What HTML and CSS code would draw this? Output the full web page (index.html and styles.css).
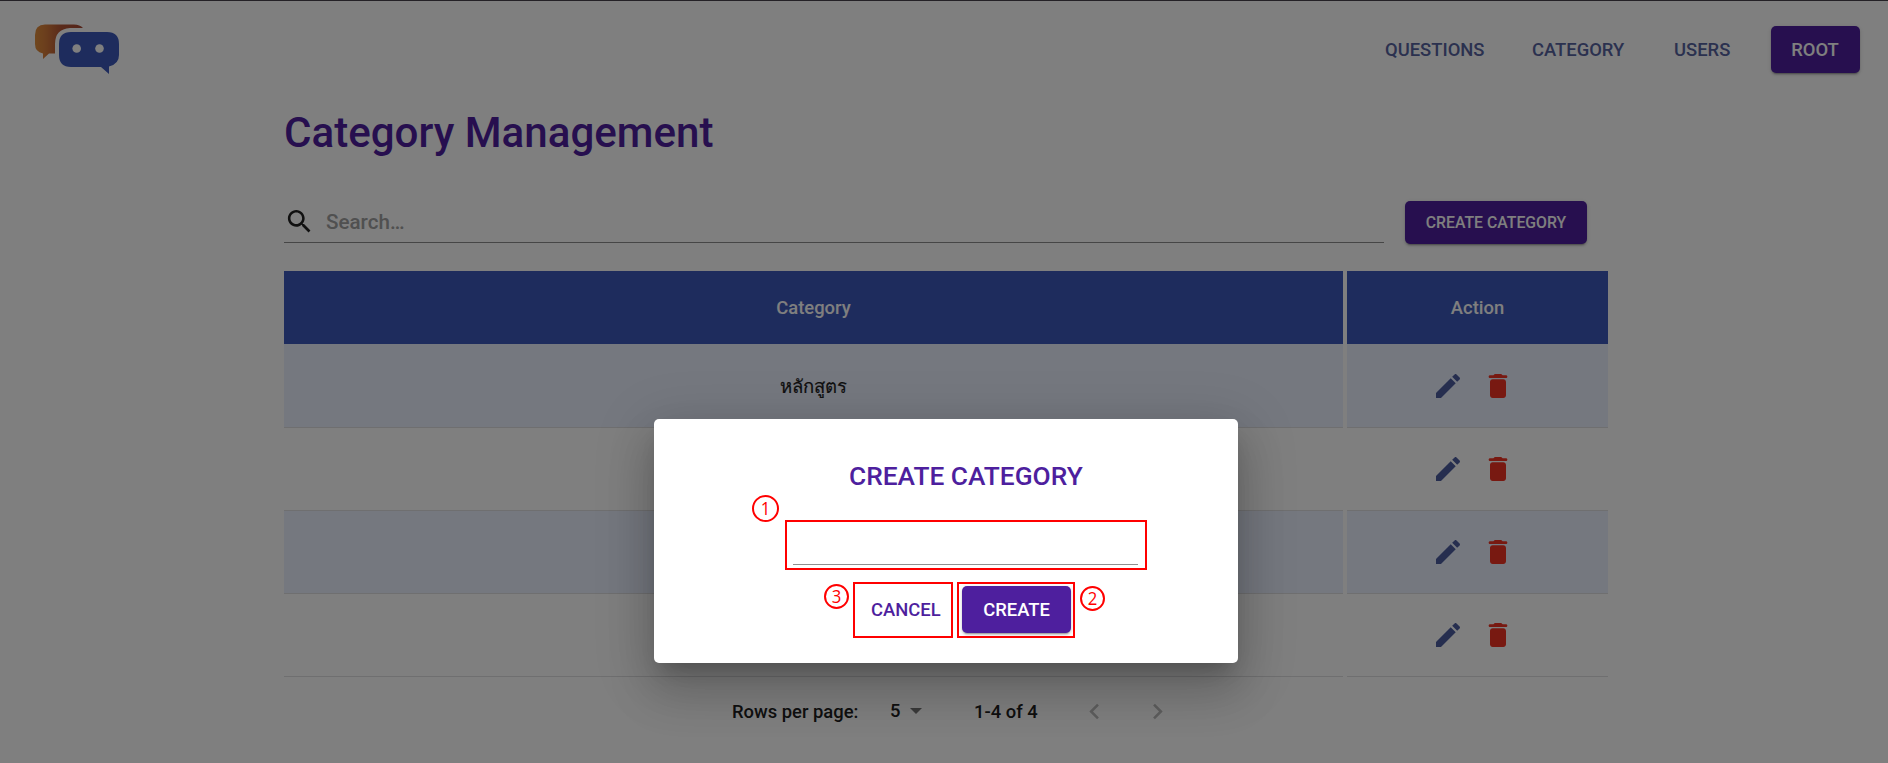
FILE: index.html
```html
<!DOCTYPE html>
<html lang="en">
<head>
<meta charset="utf-8">
<title>Category Management</title>
<link rel="stylesheet" href="styles.css">
</head>
<body>
<svg width="0" height="0" class="defs">
  <symbol id="edit" viewBox="0 0 24 24"><path d="M3 17.25V21h3.75L17.81 9.94l-3.75-3.75L3 17.25zM20.71 7.04c.39-.39.39-1.02 0-1.41l-2.34-2.34c-.39-.39-1.02-.39-1.41 0l-1.83 1.83 3.75 3.75 1.83-1.83z"/></symbol>
  <symbol id="delete" viewBox="0 0 24 24"><path d="M6 19c0 1.1.9 2 2 2h8c1.1 0 2-.9 2-2V9c0-1.100-.9-2-2-2H8c-1.100 0-2 .9-2 2v10zM18 4h-2.500l-.71-.71c-.18-.18-.44-.29-.7-.29H9.910c-.26 0-.52.11-.7.29L8.500 4H6c-.55 0-1 .45-1 1s.45 1 1 1h12c.55 0 1-.45 1-1s-.45-1-1-1z"/></symbol>
</svg>
<header class="topbar">
  <svg class="logo" viewBox="0 0 86 52">
    <defs><linearGradient id="orange" x1="0" x2="1"><stop offset="0" stop-color="#e08e3c"/><stop offset=".2" stop-color="#d97f3a"/><stop offset=".55" stop-color="#b45535"/><stop offset="1" stop-color="#a84a34"/></linearGradient></defs>
    <path fill="url(#orange)" d="M10 .5h29q6 0 9 3.500H35Q20 5 20 20v9.500h-6l-6 5.500V29.500Q0 28 0 20V11Q0 .5 10 .5z"/>
    <path fill="#3c59ba" d="M36 8h36q12 0 12 12v11q0 9-10 11.500v7.500l-8-7H36q-12 0-12-12V20Q24 8 36 8z"/>
    <circle cx="41.700" cy="24.500" r="4.300" fill="#fff"/><circle cx="64.500" cy="24.500" r="4.300" fill="#fff"/>
  </svg>
  <nav class="nav">
    <a class="nav-link">QUESTIONS</a>
    <a class="nav-link nav-category">CATEGORY</a>
    <a class="nav-link nav-users">USERS</a>
    <button class="btn btn-root">ROOT</button>
  </nav>
</header>
<main class="content">
  <h1 class="page-title">Category Management</h1>
  <div class="toolbar">
    <div class="search">
      <svg class="icon" viewBox="0 0 24 24"><path d="M15.500 14h-.79l-.28-.27C15.410 12.590 16 11.110 16 9.500 16 5.910 13.090 3 9.500 3S3 5.910 3 9.500 5.910 16 9.500 16c1.610 0 3.090-.59 4.230-1.570l.27.28v.79l5 4.990L20.490 19l-4.990-5zm-6 0C7.010 14 5 11.990 5 9.500S7.010 5 9.500 5 14 7.010 14 9.500 11.990 14 9.500 14z"/></svg>
      <span class="placeholder">Search…</span>
    </div>
    <button class="btn btn-new">CREATE CATEGORY</button>
  </div>
  <div class="table">
    <div class="row head"><div class="cell">Category</div><div class="cell">Action</div></div>
    <div class="row first tinted"><div class="cell thai" lang="th">หลักสูตร</div><div class="cell actions"><svg class="edit"><use href="#edit"/></svg><svg class="delete"><use href="#delete"/></svg></div></div>
    <div class="row"><div class="cell"></div><div class="cell actions"><svg class="edit"><use href="#edit"/></svg><svg class="delete"><use href="#delete"/></svg></div></div>
    <div class="row tinted"><div class="cell"></div><div class="cell actions"><svg class="edit"><use href="#edit"/></svg><svg class="delete"><use href="#delete"/></svg></div></div>
    <div class="row"><div class="cell"></div><div class="cell actions"><svg class="edit"><use href="#edit"/></svg><svg class="delete"><use href="#delete"/></svg></div></div>
  </div>
  <div class="pagination">
    <span class="rows-label">Rows per page:</span>
    <span class="rows-value">5</span>
    <svg class="caret" viewBox="0 0 12 6"><path d="M0 0h12L6 6z"/></svg>
    <span class="range">1-4 of 4</span>
    <svg class="chevron" viewBox="0 0 24 24"><path d="M15.410 7.410 14 6l-6 6 6 6 1.410-1.410L10.830 12z"/></svg>
    <svg class="chevron next" viewBox="0 0 24 24"><path d="M10 6 8.590 7.410 13.170 12l-4.580 4.590L10 18l6-6z"/></svg>
  </div>
</main>
<div class="backdrop"></div>
<div class="edge"></div>
<section class="dialog">
  <h2 class="dialog-title">CREATE CATEGORY</h2>
  <div class="field"><div class="field-line"></div><span class="badge badge-one"><span class="digit">1</span></span></div>
  <div class="dialog-actions">
    <div class="outline outline-cancel"><span class="cancel">CANCEL</span><span class="badge badge-three"><span class="digit">3</span></span></div>
    <div class="outline outline-create"><button class="btn btn-create">CREATE</button><span class="badge badge-two"><span class="digit">2</span></span></div>
  </div>
</section>
</body>
</html>
```
FILE: styles.css
```css
* { box-sizing: border-box; }
body { margin: 0; height: 763px; overflow: hidden; background: #fff; font-family: Roboto, "Noto Sans", sans-serif; font-weight: 500; color: #212121; position: relative; }
.defs { position: absolute; }
.topbar { height: 100px; display: flex; justify-content: space-between; padding: 24px 28px 0 35px; }
.logo { width: 86px; height: 52px; }
.nav { display: flex; flex: none; width: 475px; height: 52px; align-items: center; font-size: 18.4px; white-space: nowrap; }
.nav-link { width: 147px; padding-bottom: 1px; color: #56639f; }
.nav-category { width: 142px; }
.nav-users { width: 96.5px; }
.btn { border: 0; padding: 0; border-radius: 5px; background: #4e1f9e; color: #fff; font-family: inherit; font-weight: 500; text-align: center; white-space: nowrap; box-shadow: 0 3px 1px -2px rgba(0,0,0,.2), 0 2px 2px rgba(0,0,0,.14), 0 1px 5px rgba(0,0,0,.12); }
.btn-root { width: 89px; height: 47px; font-size: 18.4px; margin-bottom: 1px; }
.content { width: 1324px; margin-left: 284px; }
.page-title { margin: 0; padding-top: 8px; height: 101px; font-size: 42.1px; line-height: 50px; font-weight: 500; color: #4e1f9e; white-space: nowrap; }
.toolbar { display: flex; height: 70px; gap: 21px; }
.search { width: 1100px; height: 42px; border-bottom: 1px solid #8c8c8c; display: flex; gap: 11px; }
.icon { width: 31px; height: 31px; margin-top: 5px; fill: #212121; }
.placeholder { font-size: 20.6px; line-height: 42px; color: #a0a0a0; }
.btn-new { width: 182px; height: 43px; padding-bottom: 1px; font-size: 15.8px; }
.row { display: grid; grid-template-columns: 1059px 261px; gap: 4px; height: 83px; }
.cell { display: flex; align-items: center; justify-content: center; border-bottom: 1px solid #dfdfe0; font-size: 18.4px; }
.head { height: 73px; }
.head .cell { background: #3c59ba; color: #fff; border: 0; }
.first { height: 84px; }
.tinted .cell { background: #eaf0ff; }
.thai { font-size: 18.5px; padding-top: 2px; -webkit-text-stroke: .2px #212121; }
.actions { justify-content: flex-start; padding-left: 85px; gap: 18px; }
.edit, .delete { width: 32px; height: 32px; fill: #4c5c9f; }
.delete { fill: #f13223; }
.pagination { display: flex; align-items: center; height: 68px; padding-left: 448px; font-size: 18.4px; white-space: nowrap; }
.rows-label { width: 158px; }
.rows-value { width: 20px; padding-bottom: 1px; }
.caret { width: 12px; height: 6px; fill: #757575; }
.range { width: 105px; margin-left: 52px; }
.chevron { width: 31px; height: 31px; fill: #bcbcbc; }
.next { margin-left: 32px; }
.backdrop { position: absolute; inset: 0; background: rgba(0,0,0,.5); }
.edge { position: absolute; inset: 0 0 auto; height: 1px; background: #242126; }
.dialog { position: absolute; left: 654px; top: 419px; width: 584px; height: 244px; background: #fff; border-radius: 5px; box-shadow: 0 13px 18px -8px rgba(0,0,0,.2), 0 29px 46px 4px rgba(0,0,0,.14), 0 11px 55px 10px rgba(0,0,0,.12); }
.dialog-title { margin: 0; padding: 40px 0 0 195px; height: 101px; font-size: 26.3px; line-height: 34px; font-weight: 500; color: #4e1f9e; white-space: nowrap; }
.field { position: relative; width: 362px; height: 50px; margin-left: 131px; border: 2px solid #f00; padding: 42px 7px 0 6px; }
.field-line { height: 1px; background: #909090; }
.dialog-actions { display: flex; gap: 4px; padding: 12px 0 0 199px; }
.outline { position: relative; height: 56px; border: 2px solid #f00; font-size: 18.4px; }
.outline-cancel { width: 100px; padding-left: 16px; line-height: 52px; color: #4e1f9e; }
.outline-create { width: 118px; padding: 2px 0 0 3px; }
.btn-create { width: 109px; height: 47px; font-size: 18.4px; display: block; }
.badge { position: absolute; display: flex; align-items: center; justify-content: center; width: 25px; height: 25px; border: 2px solid #f00; border-radius: 50%; font: 400 19px/1 "Open Sans", sans-serif; color: #f00; }
.digit { transform: scaleX(.88); }
.badge-one { left: -35px; top: -27px; width: 27px; height: 27px; }
.badge-three { left: -31.5px; top: 0; }
.badge-two { left: 121px; top: 2px; }
```
